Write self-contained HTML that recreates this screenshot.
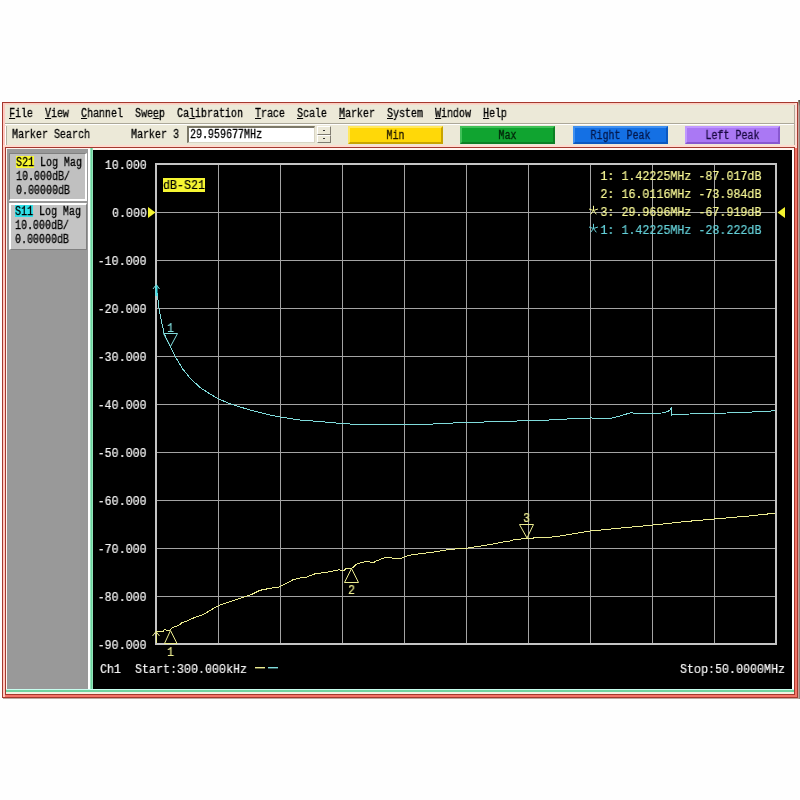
<!DOCTYPE html>
<html><head><meta charset="utf-8"><title>VNA</title>
<style>
html,body{margin:0;padding:0;}
body{width:800px;height:800px;background:#fefefe;position:relative;overflow:hidden;font-family:"Liberation Mono",monospace;}
div{box-sizing:border-box;}
.a{position:absolute;}
.t14{position:absolute;will-change:transform;-webkit-text-stroke:0.2px currentColor;font:13px/16px "Liberation Mono",monospace;white-space:pre;transform:scaleX(0.8974);transform-origin:0 0;}
.t14.r{transform-origin:100% 0;}
.t12{position:absolute;will-change:transform;-webkit-text-stroke:0.3px currentColor;font:12px/14px "Liberation Mono",monospace;white-space:pre;transform:scaleX(0.8333);transform-origin:0 0;}
.t12 u{text-decoration:underline;text-underline-offset:1px;}
.btn{position:absolute;top:126px;width:95px;height:18px;border:2px solid;}
</style></head><body>
<!-- window shadow -->
<div class="a" style="left:3px;top:698px;width:796px;height:1px;background:#c0a8a0"></div>
<div class="a" style="left:798px;top:100px;width:1px;height:599px;background:linear-gradient(#808070 0,#c8a098 6px)"></div>
<div class="a" style="left:799px;top:100px;width:1px;height:599px;background:linear-gradient(#505040 0,#908880 6px)"></div>
<!-- window -->
<div class="a" style="left:2px;top:102px;width:796px;height:596px;background:#ece9d8;border:1px solid #a4382e"></div>
<!-- inner glow -->
<div class="a" style="left:3px;top:103px;width:794px;height:2px;background:linear-gradient(#ffc4b8,#f4e0d0)"></div>
<div class="a" style="left:3px;top:103px;width:2px;height:594px;background:#ffc8c0"></div>
<div class="a" style="left:794px;top:105px;width:1px;height:42px;background:#b0aa9c"></div>
<div class="a" style="left:795px;top:103px;width:2px;height:45px;background:#ffe0d8"></div>
<!-- menu bottom lines -->
<div class="a" style="left:5px;top:123px;width:789px;height:1px;background:#aca899"></div>
<div class="a" style="left:5px;top:124px;width:789px;height:1px;background:#ffffff"></div>
<!-- toolbar grip -->
<div class="a" style="left:5px;top:126px;width:1px;height:19px;background:#fff"></div>
<div class="a" style="left:6px;top:126px;width:1px;height:19px;background:#b4b0a0"></div>
<!-- toolbar bottom pink -->
<div class="a" style="left:3px;top:145px;width:794px;height:2px;background:#ffdcd0"></div>
<!-- frame: salmon right/bottom -->
<div class="a" style="left:795px;top:148px;width:2px;height:549px;background:#f47468"></div>
<div class="a" style="left:5px;top:695px;width:792px;height:2px;background:#f47468"></div>
<!-- inner dark red rect -->
<div class="a" style="left:5px;top:147px;width:790px;height:548px;border:1px solid #a4382e;background:#fff4ee"></div>
<!-- gray panel -->
<div class="a" style="left:7px;top:149px;width:81px;height:540px;background:#999999"></div>
<div class="a" style="left:88px;top:149px;width:2px;height:540px;background:#ffffff"></div>
<!-- plot black -->
<div class="a" style="left:93px;top:150px;width:699px;height:539px;background:#000"></div>
<div class="a" style="left:792px;top:150px;width:2px;height:543px;background:#ffffff"></div>
<!-- green lines -->
<div class="a" style="left:90px;top:148px;width:3px;height:543px;background:linear-gradient(90deg,#b8f4dc,#6cd49c 40%,#6cd49c 60%,#b0f0d4)"></div>
<div class="a" style="left:6px;top:689px;width:788px;height:1px;background:#c8fff0"></div>
<div class="a" style="left:6px;top:690px;width:788px;height:2px;background:#70d4a0"></div>
<div class="a" style="left:6px;top:692px;width:788px;height:2px;background:#f4f0e0"></div>
<!-- trace buttons -->
<div class="a" style="left:9px;top:153px;width:78px;height:48px;background:#c0c0c0;border-style:solid;border-width:1px 2px 2px 1px;border-color:#808080 #fff #fff #808080"></div>
<div class="a" style="left:9px;top:203px;width:78px;height:47px;background:#c4c4c4;border-style:solid;border-width:2px 1px 1px 2px;border-color:#fff #808080 #808080 #fff"></div>
<!-- input -->
<div class="a" style="left:187px;top:126px;width:128px;height:17px;background:#fff;border-style:solid;border-width:2px 1px 1px 2px;border-color:#7c7868 #d8d4c4 #d8d4c4 #7c7868"></div>
<div class="a" style="left:317px;top:126px;width:14px;height:9px;background:#ece9d8;border:1px solid;border-color:#fff #807c70 #807c70 #fff"></div>
<div class="a" style="left:317px;top:135px;width:14px;height:8px;background:#ece9d8;border:1px solid;border-color:#fff #807c70 #807c70 #fff"></div>
<div class="a" style="left:323px;top:130px;width:2px;height:1px;background:#333"></div>
<div class="a" style="left:323px;top:138px;width:2px;height:1px;background:#333"></div>
<div class="btn" style="left:348px;background:#ffd808;border-color:#ffe860 #c8a400 #c8a400 #ffe860"></div><div class="t12" style="left:348px;top:129px;width:114px;text-align:center;color:#201800">Min</div><div class="btn" style="left:460px;background:#10a430;border-color:#40c058 #0c8024 #0c8024 #40c058"></div><div class="t12" style="left:460px;top:129px;width:114px;text-align:center;color:#022008">Max</div><div class="btn" style="left:573px;background:#1470e4;border-color:#4090f0 #0c58c0 #0c58c0 #4090f0"></div><div class="t12" style="left:573px;top:129px;width:114px;text-align:center;color:#04184c">Right Peak</div><div class="btn" style="left:685px;background:#aa78f4;border-color:#c098ff #8858d0 #8858d0 #c098ff"></div><div class="t12" style="left:685px;top:129px;width:114px;text-align:center;color:#180840">Left Peak</div>
<svg class="a" style="left:0;top:0" width="800" height="800" viewBox="0 0 800 800">
<rect x="218" y="165" width="1" height="478" fill="#a4a4a4"/><rect x="157" y="212" width="618" height="1" fill="#a4a4a4"/><rect x="280" y="165" width="1" height="478" fill="#a4a4a4"/><rect x="157" y="260" width="618" height="1" fill="#a4a4a4"/><rect x="342" y="165" width="1" height="478" fill="#a4a4a4"/><rect x="157" y="308" width="618" height="1" fill="#a4a4a4"/><rect x="404" y="165" width="1" height="478" fill="#a4a4a4"/><rect x="157" y="356" width="618" height="1" fill="#a4a4a4"/><rect x="466" y="165" width="1" height="478" fill="#a4a4a4"/><rect x="157" y="404" width="618" height="1" fill="#a4a4a4"/><rect x="528" y="165" width="1" height="478" fill="#a4a4a4"/><rect x="157" y="452" width="618" height="1" fill="#a4a4a4"/><rect x="590" y="165" width="1" height="478" fill="#a4a4a4"/><rect x="157" y="500" width="618" height="1" fill="#a4a4a4"/><rect x="652" y="165" width="1" height="478" fill="#a4a4a4"/><rect x="157" y="548" width="618" height="1" fill="#a4a4a4"/><rect x="714" y="165" width="1" height="478" fill="#a4a4a4"/><rect x="157" y="596" width="618" height="1" fill="#a4a4a4"/><rect x="156" y="164" width="620" height="480" fill="none" stroke="#c4c4c4" stroke-width="2"/><polyline points="156.0,284.5 156.6,290.0 157.5,296.0 159.0,308.0 161.0,319.0 164.0,333.0 167.0,340.0 170.0,346.0 175.0,356.0 182.5,368.8 190.0,378.0 200.0,387.5 210.0,394.0 218.8,399.0 230.0,403.8 250.0,410.0 270.0,415.0 280.0,417.0 300.0,420.0 325.0,422.0 342.0,423.5 350.0,424.0 356.5,425.0 380.0,424.6 403.0,424.5 428.0,424.8 436.0,423.5 466.5,422.6 505.0,421.3 530.0,420.7 549.0,420.0 560.0,419.3 590.0,418.0 611.0,418.2 620.5,415.8 631.5,412.5 634.0,413.5 661.8,413.0 668.0,411.5 670.5,409.5 671.4,407.5 671.4,415.6 672.8,414.4 690.0,414.0 714.0,413.5 752.5,412.0 775.0,410.8" fill="none" stroke="#80dcdc" stroke-width="1" shape-rendering="crispEdges"/><polyline points="156.0,643.0 156.0,631.6 163.0,631.4 164.5,629.6 166.0,630.1 169.0,630.6 170.5,629.6 171.5,628.1 173.0,627.4 178.0,625.8 180.0,624.5 182.0,622.6 186.0,621.6 189.0,620.0 194.0,617.8 202.3,615.0 210.0,610.5 218.8,605.4 238.0,599.0 251.8,594.4 260.0,590.3 270.0,588.3 279.3,587.0 286.0,583.5 293.0,579.8 300.0,578.0 306.8,577.0 315.0,573.8 328.0,572.0 330.0,571.5 338.0,570.2 339.5,569.4 340.5,570.3 344.0,570.5 346.0,568.6 351.0,568.5 353.0,567.5 355.0,565.5 357.5,563.4 360.0,563.0 361.5,562.2 363.0,563.0 365.0,561.2 368.0,561.4 370.0,562.0 374.0,562.3 376.0,561.0 380.0,559.5 385.8,557.2 393.0,558.2 401.0,558.3 407.0,556.0 413.3,554.5 432.5,552.3 449.0,549.5 468.3,548.0 493.0,544.0 505.0,541.6 510.0,541.0 513.0,540.0 519.0,539.3 524.0,538.4 527.0,538.1 533.5,538.1 534.5,537.4 550.0,537.2 560.0,536.0 590.3,531.0 623.3,527.8 653.5,525.0 683.8,521.7 714.0,519.0 747.0,516.2 775.0,513.2" fill="none" stroke="#ecec90" stroke-width="1" shape-rendering="crispEdges"/><polyline points="153,289 156.3,284.5 159.5,289" fill="none" stroke="#80dcdc" stroke-width="1"/><rect x="155.5" y="286" width="2" height="10" fill="#40e0e8"/><polyline points="152.5,636 156,631.5 159.5,636" fill="none" stroke="#ecec90" stroke-width="1"/><polygon points="163.5,333.5 177.5,333.5 170.5,346.5" fill="none" stroke="#80dcdc" stroke-width="1"/><polygon points="164.5,643.5 177,643.5 170.5,630.5" fill="none" stroke="#ecec90" stroke-width="1"/><polygon points="344.5,582.5 358.5,582.5 351.5,568.5" fill="none" stroke="#ecec90" stroke-width="1"/><polygon points="519.5,524.5 533.5,524.5 527,538" fill="none" stroke="#ecec90" stroke-width="1"/><polygon points="148,207 148,218 155.5,212.5" fill="#f4f430"/><polygon points="785,207 785,218 777.5,212.5" fill="#f4f430"/><rect x="255" y="667" width="10" height="1.4" fill="#ecec90"/><rect x="268" y="667" width="10" height="1.4" fill="#80dcdc"/><line x1="593.5" y1="210.5" x2="593.5" y2="205.8" stroke="#f6f694" stroke-width="1"/><line x1="593.5" y1="210.5" x2="598.0" y2="209.0" stroke="#f6f694" stroke-width="1"/><line x1="593.5" y1="210.5" x2="596.3" y2="214.3" stroke="#f6f694" stroke-width="1"/><line x1="593.5" y1="210.5" x2="590.7" y2="214.3" stroke="#f6f694" stroke-width="1"/><line x1="593.5" y1="210.5" x2="589.0" y2="209.0" stroke="#f6f694" stroke-width="1"/><line x1="593.5" y1="228.5" x2="593.5" y2="223.8" stroke="#64d0d8" stroke-width="1"/><line x1="593.5" y1="228.5" x2="598.0" y2="227.0" stroke="#64d0d8" stroke-width="1"/><line x1="593.5" y1="228.5" x2="596.3" y2="232.3" stroke="#64d0d8" stroke-width="1"/><line x1="593.5" y1="228.5" x2="590.7" y2="232.3" stroke="#64d0d8" stroke-width="1"/><line x1="593.5" y1="228.5" x2="589.0" y2="227.0" stroke="#64d0d8" stroke-width="1"/>
</svg>
<div class="t14 r" style="right:653px;top:158px;color:#f4f4f4;">10.000</div><div class="t14 r" style="right:653px;top:206px;color:#f4f4f4;">0.000</div><div class="t14 r" style="right:653px;top:254px;color:#f4f4f4;">-10.000</div><div class="t14 r" style="right:653px;top:302px;color:#f4f4f4;">-20.000</div><div class="t14 r" style="right:653px;top:350px;color:#f4f4f4;">-30.000</div><div class="t14 r" style="right:653px;top:398px;color:#f4f4f4;">-40.000</div><div class="t14 r" style="right:653px;top:446px;color:#f4f4f4;">-50.000</div><div class="t14 r" style="right:653px;top:494px;color:#f4f4f4;">-60.000</div><div class="t14 r" style="right:653px;top:542px;color:#f4f4f4;">-70.000</div><div class="t14 r" style="right:653px;top:590px;color:#f4f4f4;">-80.000</div><div class="t14 r" style="right:653px;top:638px;color:#f4f4f4;">-90.000</div><div class="t14" style="left:100px;top:662px;color:#f4f4f4;">Ch1  Start:300.000kHz</div><div class="t14 r" style="right:15px;top:662px;color:#f4f4f4;">Stop:50.0000MHz</div><div class="t14 r" style="right:39px;top:169px;color:#f6f694;">1: 1.42225MHz -87.017dB</div><div class="t14 r" style="right:39px;top:187px;color:#f6f694;">2: 16.0116MHz -73.984dB</div><div class="t14 r" style="right:39px;top:205px;color:#f6f694;">3: 29.9696MHz -67.919dB</div><div class="t14 r" style="right:39px;top:223px;color:#64d0d8;">1: 1.42225MHz -28.222dB</div><div class="t14" style="left:167px;top:321px;color:#80dcdc;">1</div><div class="t14" style="left:167px;top:645px;color:#ecec90;">1</div><div class="t14" style="left:348px;top:583px;color:#ecec90;">2</div><div class="t14" style="left:523px;top:511px;color:#ecec90;">3</div><div style="position:absolute;left:163px;top:178px;width:42px;height:14px;background:#f6f632"></div><div class="t14" style="left:163px;top:178px;color:#000;">dB-S21</div><div class="t12" style="left:9px;top:107px;color:#000;"><u>F</u>ile</div><div class="t12" style="left:45px;top:107px;color:#000;"><u>V</u>iew</div><div class="t12" style="left:81px;top:107px;color:#000;"><u>C</u>hannel</div><div class="t12" style="left:135px;top:107px;color:#000;">Swe<u>e</u>p</div><div class="t12" style="left:177px;top:107px;color:#000;">Ca<u>l</u>ibration</div><div class="t12" style="left:255px;top:107px;color:#000;"><u>T</u>race</div><div class="t12" style="left:297px;top:107px;color:#000;"><u>S</u>cale</div><div class="t12" style="left:339px;top:107px;color:#000;"><u>M</u>arker</div><div class="t12" style="left:387px;top:107px;color:#000;"><u>S</u>ystem</div><div class="t12" style="left:435px;top:107px;color:#000;"><u>W</u>indow</div><div class="t12" style="left:483px;top:107px;color:#000;"><u>H</u>elp</div><div class="t12" style="left:12px;top:127.5px;color:#000;">Marker Search</div><div class="t12" style="left:131px;top:127.5px;color:#000;">Marker 3</div><div class="t12" style="left:190px;top:128px;color:#000;">29.959677MHz</div><div style="position:absolute;left:16px;top:156px;width:18px;height:12px;background:#f8f830"></div><div class="t12" style="left:16px;top:155.5px;color:#000;">S21 Log Mag</div><div class="t12" style="left:16px;top:169.5px;color:#000;">10.000dB/</div><div class="t12" style="left:16px;top:183.5px;color:#000;">0.00000dB</div><div style="position:absolute;left:15px;top:205px;width:18px;height:12px;background:#30e0e8"></div><div class="t12" style="left:15px;top:204.5px;color:#000;">S11 Log Mag</div><div class="t12" style="left:15px;top:218.5px;color:#000;">10.000dB/</div><div class="t12" style="left:15px;top:232.5px;color:#000;">0.00000dB</div>
</body></html>
